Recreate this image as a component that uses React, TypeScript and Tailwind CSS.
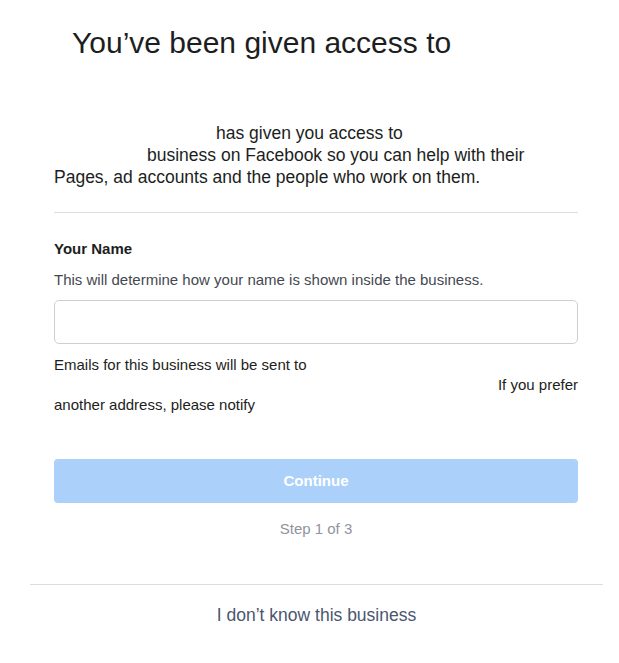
export default function App() {
  return (
    <div className="min-h-[663px] w-[619px] bg-white font-['Liberation_Sans',Arial,sans-serif] text-[#1c1e21]">
      <div className="ml-[30px] w-[573px]">
        <div className="ml-[24px] w-[524px] pt-[26px]">
          <h1 className="pl-[18px] text-[30px] leading-[34px] font-normal">
            You’ve been given access to
          </h1>
          {/* business name (hidden in the capture) */}
          <div className="h-[34px]" />

          <div className="mt-[28px] text-[17.5px] leading-[22px]">
            <p className="pl-[162px]">has given you access to</p>
            <p className="pl-[93px]">business on Facebook so you can help with their</p>
            <p>Pages, ad accounts and the people who work on them.</p>
          </div>

          <div className="mt-[24px] border-t border-[#dadde1]" />

          <div className="mt-[26px] text-[15px] leading-[20px]">
            <label className="block font-bold text-[#1c1e21]" htmlFor="your-name">
              Your Name
            </label>
            <p className="mt-[11px] text-[#444950]">
              This will determine how your name is shown inside the business.
            </p>
            <input
              className="mt-[10px] block h-[44px] w-full rounded-[5px] border border-[#ccd0d5] px-3 text-[15px] outline-none"
              id="your-name"
              type="text"
            />
            <div className="mt-[11px] text-[#1c1e21]">
              <p>Emails for this business will be sent to</p>
              <p className="text-right">If you prefer</p>
              <p>another address, please notify</p>
            </div>
          </div>

          <button
            className="mt-[44px] block h-[44px] w-full rounded-[4px] bg-[#abd1fb] text-[15px] font-bold text-white"
            disabled
            type="button"
          >
            Continue
          </button>
          <p className="mt-[16px] text-center text-[15px] leading-[20px] text-[#90949c]">Step 1 of 3</p>
        </div>

        <div className="mt-[45px] border-t border-[#dadde1]" />
        <div className="pt-[19px] text-center">
          <a className="text-[17.5px] leading-[22px] text-[#4b5670]" href="#">
            I don’t know this business
          </a>
        </div>
      </div>
    </div>
  );
}
